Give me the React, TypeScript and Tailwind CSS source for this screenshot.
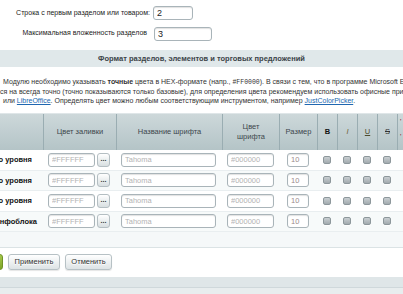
import React from "react";

const inp =
  "h-[14px] border border-[#a9b4b9] rounded-[3px] bg-white shadow-[inset_0_1px_1px_rgba(0,0,0,0.12)] px-[3px] text-[7.5px] leading-[12px] outline-none placeholder:text-[#b3b3b3]";

function Checkbox() {
  return (
    <div className="w-[8px] h-[8px] rounded-[2px] border border-[#8d979b] bg-gradient-to-b from-[#c9cfd2] to-[#a2aaae] shadow-[0_1px_0_rgba(255,255,255,0.8)]" />
  );
}

function Row({ label, pr, shade }: { label: string; pr: string; shade: boolean }) {
  return (
    <div
      className={`grid grid-cols-[43px_73px_106px_57px_38px_20px_20px_20px_20px_1fr] h-[20.5px] items-center border-b border-[#e9eef0] ${
        shade ? "bg-[#f7fafa]" : "bg-white"
      }`}
    >
      <div className={`flex justify-end overflow-hidden whitespace-nowrap font-bold text-[7.5px] text-[#111] ${pr}`}>
        {label}
      </div>
      <div className="flex items-center pl-[5px] gap-[2px]">
        <input className={`${inp} w-[47px]`} placeholder="#FFFFFF" readOnly />
        <div className="w-[13px] h-[14px] rounded-[3px] border border-[#b4bec2] bg-gradient-to-b from-white to-[#d8dfe1] flex items-center justify-center text-[7px] font-bold text-[#333] leading-none pb-[2px]">
          ...
        </div>
      </div>
      <div className="pl-[5px]">
        <input className={`${inp} w-[95px]`} placeholder="Tahoma" readOnly />
      </div>
      <div className="pl-[5px]">
        <input className={`${inp} w-[47px]`} placeholder="#000000" readOnly />
      </div>
      <div className="flex justify-center">
        <input className={`${inp} w-[22px] text-[#9a8a8a]`} defaultValue="10" readOnly />
      </div>
      <div className="flex justify-center"><Checkbox /></div>
      <div className="flex justify-center"><Checkbox /></div>
      <div className="flex justify-center"><Checkbox /></div>
      <div className="flex justify-center"><Checkbox /></div>
      <div />
    </div>
  );
}

export default function App() {
  const hc = "flex items-center justify-center border-l border-[#9aadb2] text-[7.5px] text-[#3c464c] leading-[10px] text-center";
  return (
    <div className="w-[403px] h-[294px] overflow-hidden bg-white font-['Liberation_Sans',Arial,sans-serif] text-[7px] text-[#222]">
      {/* top settings */}
      <div className="grid grid-cols-[150px_auto] gap-x-[3px] gap-y-[7px] pt-[6px] items-start">
        <div className="text-right pt-[2px] text-[7px] text-[#222] whitespace-nowrap">Строка с первым разделом или товаром:</div>
        <div>
          <input className={`${inp} w-[40px] text-[#222] text-[9px]`} defaultValue="2" readOnly />
        </div>
        <div className="text-right pt-[1px] pr-[3px] text-[7px] text-[#222] whitespace-nowrap">Максимальная вложенность разделов</div>
        <div className="pl-[1px]">
          <input className={`${inp} w-[58px] text-[#222] text-[9px]`} defaultValue="3" readOnly />
        </div>
      </div>

      {/* section header */}
      <div className="mt-[9px] h-[17px] bg-[#e0e8ea] flex items-center justify-center font-bold text-[7.5px] text-[#3b4348]">
        Формат разделов, элементов и торговых предложений
      </div>

      {/* note */}
      <div className="pt-[10px] leading-[9px] text-[7px] text-[#333] whitespace-nowrap overflow-hidden">
        <div className="pl-[3px]">
          Модулю необходимо указывать <b>точные</b> цвета в HEX-формате (напр.,{" "}
          <span className="font-['Liberation_Mono',monospace] text-[6.5px]">#FF0000</span>). В связи с тем, что в программе Microsoft Excel
        </div>
        <div>ся на всегда точно (точно показываются только базовые), для определения цвета рекомендуем использовать офисные приложения</div>
        <div className="pl-[3px]">
          или <span className="text-[#2067b0] underline">LibreOffice</span>. Определять цвет можно любым соответствующим инструментом, например{" "}
          <span className="text-[#2067b0] underline">JustColorPicker</span>.
        </div>
      </div>

      {/* table header */}
      <div className="mt-[8px] grid grid-cols-[43px_73px_106px_57px_38px_20px_20px_20px_20px_1fr] h-[37px] bg-gradient-to-b from-[#cdd8da] to-[#b4c4c7] border-t border-[#dfe6e8]">
        <div />
        <div className={hc}>Цвет заливки</div>
        <div className={hc}>Название шрифта</div>
        <div className={hc}>
          Цвет
          <br />
          шрифта
        </div>
        <div className={hc}>Размер</div>
        <div className={`${hc} font-bold text-[#111]`}>B</div>
        <div className={`${hc} italic text-[#6e6132]`}>I</div>
        <div className={`${hc} underline text-[#4e4b2c]`}>U</div>
        <div className={`${hc} line-through text-[#333]`}>S</div>
        <div className={`${hc} justify-start pl-[2px] text-[#8e1c2e] flex-col items-start leading-[15px]`}>
          <span>'</span>
          <span>'</span>
        </div>
      </div>

      {/* rows */}
      <Row label="Разделы первого уровня" pr="pr-[11px]" shade={false} />
      <Row label="Разделы второго уровня" pr="pr-[11px]" shade={true} />
      <Row label="Разделы третьего уровня" pr="pr-[11px]" shade={false} />
      <Row label="Элементы инфоблока" pr="pr-[6px]" shade={true} />

      <div className="h-[16px] bg-[#f5f8f9] border-b border-[#dbe3e5]" />

      {/* buttons */}
      <div className="h-[29px] flex items-start pt-[6px] gap-[5px] -ml-[10px]">
        <div className="w-[13px] h-[16px] rounded-[3px] border border-[#6f9225] bg-gradient-to-b from-[#a6c94a] to-[#7ea427]" />
        <div className="h-[16px] w-[52px] rounded-[3px] border border-[#b7c1c5] bg-gradient-to-b from-white to-[#dde3e5] shadow-[0_1px_1px_rgba(0,0,0,0.1)] flex items-center justify-center text-[7.5px] text-[#333] [text-shadow:0_1px_0_#fff]">
          Применить
        </div>
        <div className="h-[16px] w-[47px] rounded-[3px] border border-[#b7c1c5] bg-gradient-to-b from-white to-[#dde3e5] shadow-[0_1px_1px_rgba(0,0,0,0.1)] flex items-center justify-center text-[7.5px] text-[#333] [text-shadow:0_1px_0_#fff]">
          Отменить
        </div>
      </div>

      {/* footer bands */}
      <div className="h-[11px] bg-[#dfe6e8] border-b border-[#cfd8db]" />
      <div className="h-[8px] bg-[#e8edee]" />
    </div>
  );
}
